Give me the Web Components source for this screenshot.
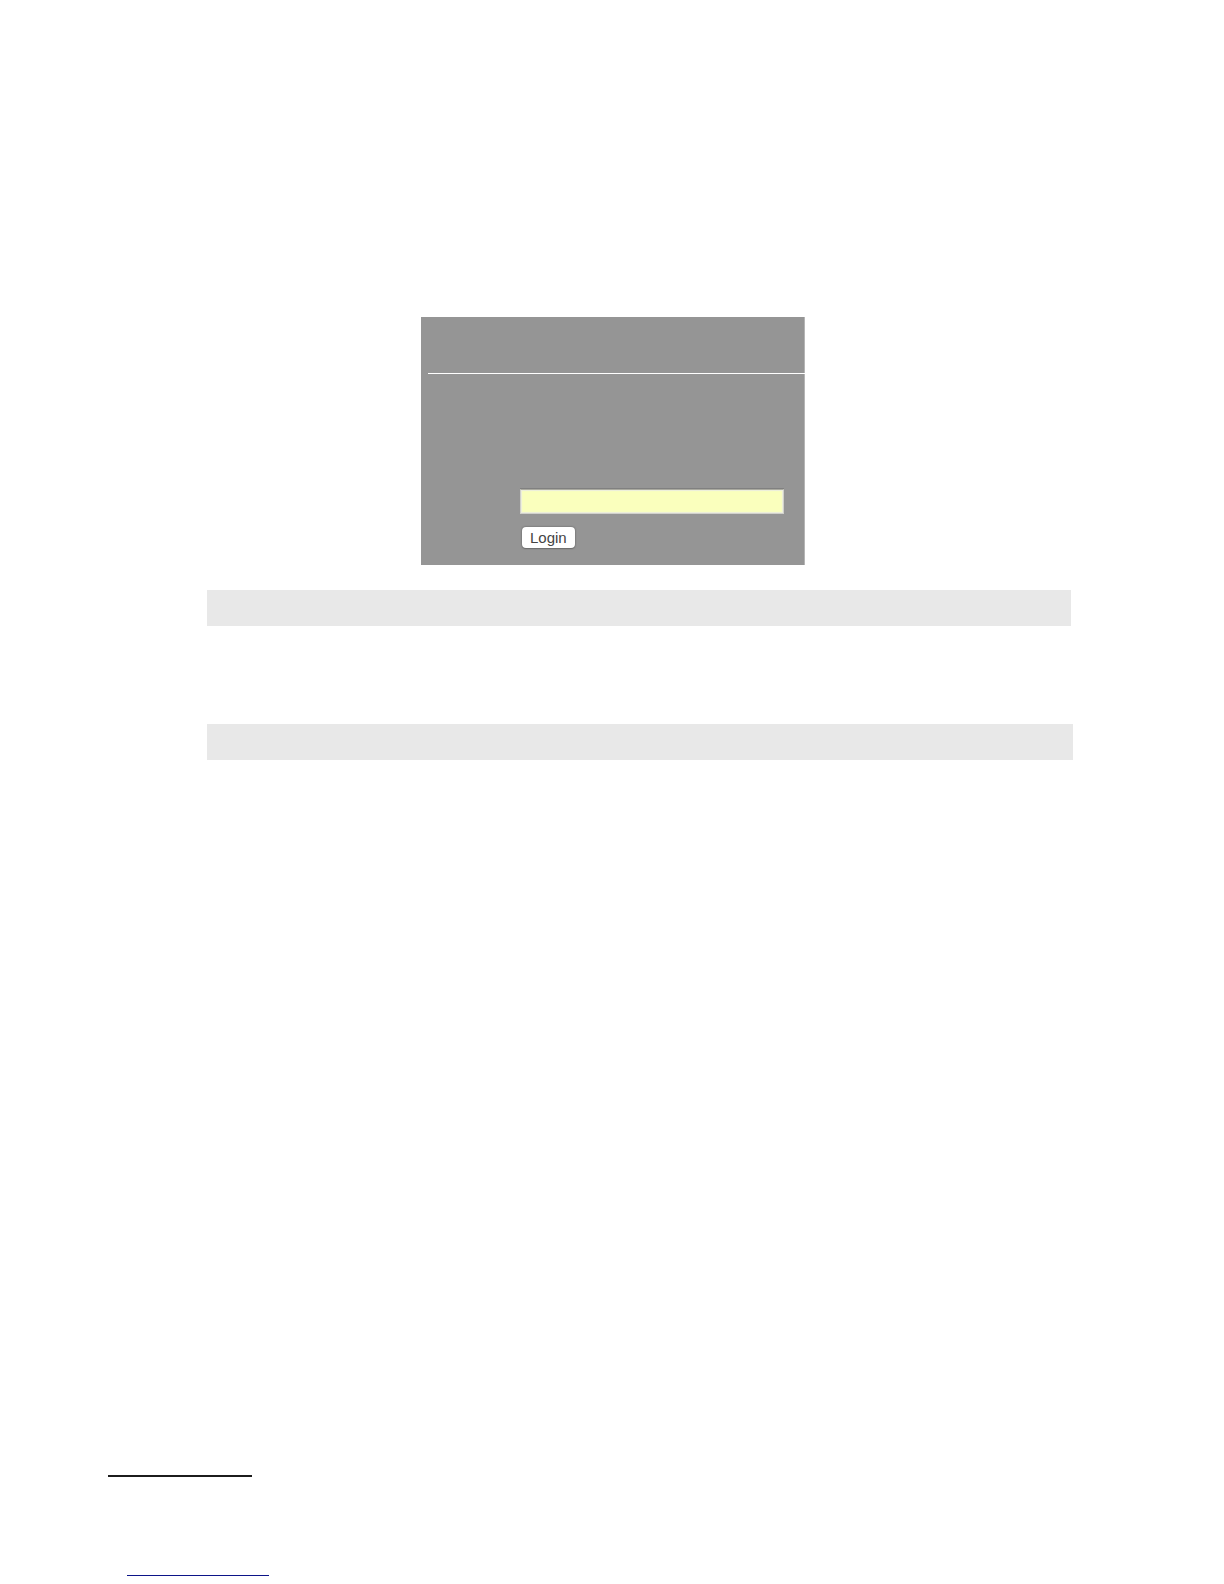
<!DOCTYPE html>
<html lang="en">
<head>
<meta charset="utf-8">
<meta name="viewport" content="width=device-width, initial-scale=1">
<title>Login</title>
<style>
  body { margin: 0; background: #fff; font-family: "Liberation Sans", Arial, sans-serif; }
</style>
</head>
<body>
<manual-page>
  <login-panel></login-panel>
  <note-bar style="--end: 47px"></note-bar>
  <note-bar style="--end: 45px"></note-bar>
  <page-footer slot="footer"></page-footer>
</manual-page>

<script>
  const define = (name, html, setup) => customElements.define(name, class extends HTMLElement {
    constructor() {
      super();
      this.attachShadow({ mode: "open" }).innerHTML = html;
      if (setup) setup(this.shadowRoot);
    }
  });

  define("manual-page", `
    <style>
      :host { display: flex; flex-direction: column; justify-content: space-between; box-sizing: border-box;
              min-height: 100vh; padding: 317px 106px 8px 108px; }
      main { display: flex; flex-direction: column; }
      ::slotted(note-bar) { margin-bottom: 98px; }
    </style>
    <main><slot></slot></main>
    <slot name="footer"></slot>
  `);

  define("login-panel", `
    <style>
      :host { display: block; box-sizing: border-box; width: 100%; max-width: 384px; margin: 0 auto 25px;
              background: #959595; box-shadow: inset -1px 0 #b5b5b5; }
      header { height: 56px; margin-left: 7px; border-bottom: 1px solid #fff; }
      form { display: flex; flex-direction: column; align-items: flex-start; gap: 13px;
             padding: 115px 21px 17px 99px; }
      input { box-sizing: border-box; width: 100%; height: 25px; margin: 0; padding: 2px 4px;
              border: 1px solid #d0d0cc; border-top-color: #aaaaa0; border-radius: 0; background: #faffbd;
              box-shadow: 0 -1px #808080, inset 0 0 1px 1px #eceedd;
              font: 15px "Liberation Sans", Arial, sans-serif; }
      button { box-sizing: border-box; height: 21px; margin: 0 2px; padding: 0 8px; border: 0; border-radius: 4px;
               background: #fff; color: #444; box-shadow: 0 0 2px #555, 0 1px 1px #777;
               font: 15px/21px "Liberation Sans", Arial, sans-serif; }
    </style>
    <header></header>
    <form>
      <input type="password" aria-label="Password" autocomplete="off">
      <button type="submit">Login</button>
    </form>
  `, root => root.querySelector("form").addEventListener("submit", e => e.preventDefault()));

  define("note-bar", `
    <style>
      :host { display: block; height: 36px; margin-left: 99px; margin-right: var(--end, 45px); background: #e8e8e8; }
    </style>
  `);

  define("page-footer", `
    <style>
      :host { display: flex; flex-direction: column; gap: 98px; }
      hr { margin: 0; border: 0; }
      .footnote { width: 144px; height: 2px; background: #1c1c1c; }
      .reference { width: 142px; height: 1px; margin-left: 19px; background: #0c1488; }
    </style>
    <hr class="footnote">
    <hr class="reference">
  `);
</script>
</body>
</html>
